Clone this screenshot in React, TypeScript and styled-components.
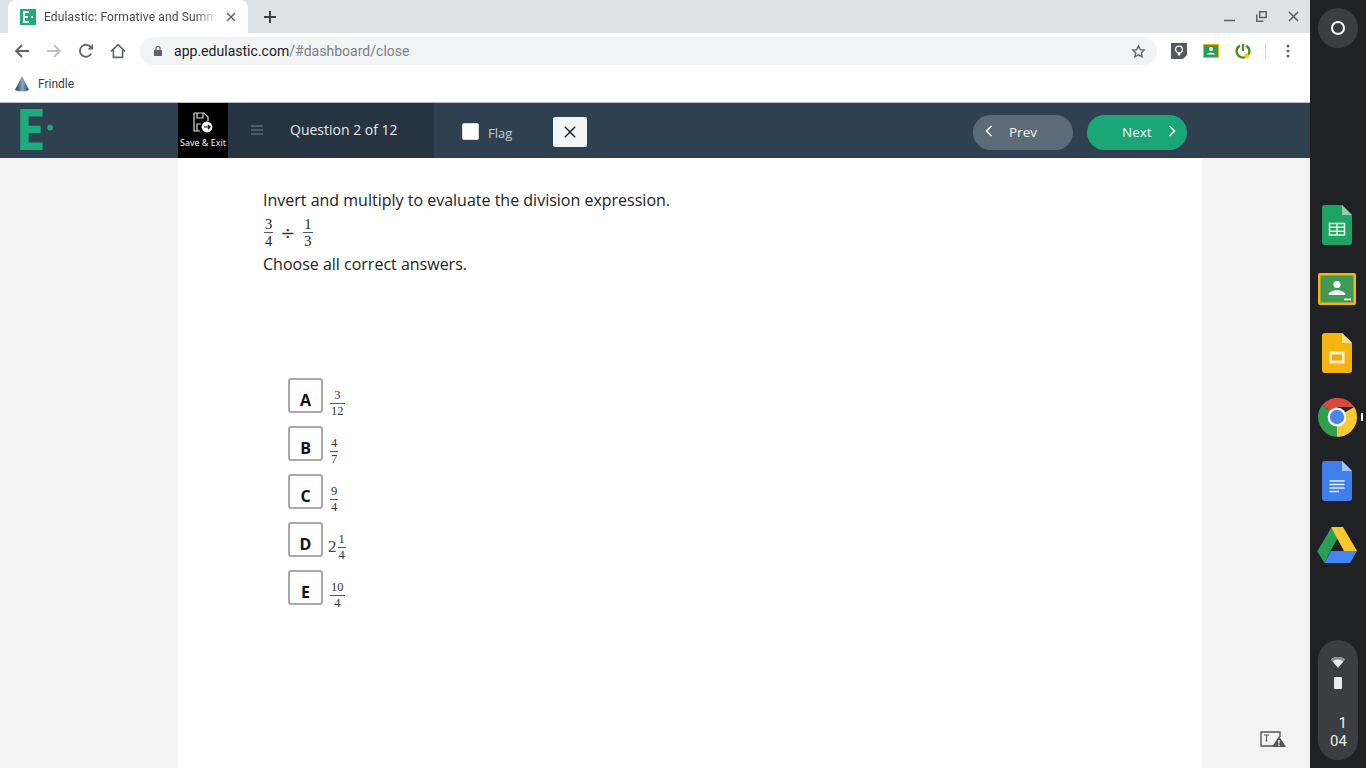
import styled, { createGlobalStyle } from "styled-components";

const GlobalStyle = createGlobalStyle`
  html, body {
    margin: 0;
    padding: 0;
    height: 100%;
    overflow: hidden;
  }
  #root {
    height: 100%;
  }
  * {
    box-sizing: border-box;
  }
`;

const answers = [
  { letter: "A", num: "3", den: "12" },
  { letter: "B", num: "4", den: "7" },
  { letter: "C", num: "9", den: "4" },
  { letter: "D", whole: "2", num: "1", den: "4" },
  { letter: "E", num: "10", den: "4" },
];

function Fraction({ num, den, big }: { num: string; den: string; big?: boolean }) {
  return (
    <Frac $big={!!big}>
      <FracNum>{num}</FracNum>
      <FracDen>{den}</FracDen>
    </Frac>
  );
}

function EduLogo({ size }: { size: number }) {
  return (
    <svg width={size} height={size * 1.14} viewBox="0 0 36 44">
      <path d="M0 0H24V8H9V18H22V26H9V36H24V44H0Z" fill="#1fab7c" />
      <circle cx="32" cy="20" r="3" fill="#1fab7c" />
    </svg>
  );
}

export default function App() {
  return (
    <Screen>
      <GlobalStyle />
      <Main>
        <TabStrip>
          <Tab>
            <Favicon>
              <svg width="10" height="12" viewBox="0 0 10 12">
                <path d="M0 0H6V2H2V5H5V7H2V10H6V12H0Z" fill="#fff" />
                <rect x="8" y="5" width="2" height="2" fill="#fff" />
              </svg>
            </Favicon>
            <TabTitle>Edulastic: Formative and Summ</TabTitle>
            <svg width="10" height="10" viewBox="0 0 10 10">
              <path d="M1 1L9 9M9 1L1 9" stroke="#5f6368" strokeWidth="1.4" />
            </svg>
          </Tab>
          <NewTab>
            <svg width="12" height="12" viewBox="0 0 12 12">
              <path d="M6 0V12M0 6H12" stroke="#3c4043" strokeWidth="2" />
            </svg>
          </NewTab>
          <WindowControls>
            <svg width="11" height="11" viewBox="0 0 11 11">
              <path d="M0 9.5H11" stroke="#5f6368" strokeWidth="1.6" />
            </svg>
            <svg width="11" height="11" viewBox="0 0 11 11">
              <path d="M3.7 .8H10.2V6.6H3.7Z" fill="none" stroke="#5f6368" strokeWidth="1.5" />
              <path d="M.8 3.6V10.2H7.4" fill="none" stroke="#5f6368" strokeWidth="1.5" />
            </svg>
            <svg width="11" height="11" viewBox="0 0 11 11">
              <path d="M1 1L10 10M10 1L1 10" stroke="#5f6368" strokeWidth="1.7" />
            </svg>
          </WindowControls>
        </TabStrip>

        <Toolbar>
          <NavIcons>
            <svg width="16" height="16" viewBox="0 0 16 16">
              <path d="M15 8H2M8 2L2 8L8 14" fill="none" stroke="#5f6368" strokeWidth="1.8" />
            </svg>
            <svg width="16" height="16" viewBox="0 0 16 16">
              <path d="M1 8H14M8 2L14 8L8 14" fill="none" stroke="#bdc1c6" strokeWidth="1.8" />
            </svg>
            <svg width="16" height="16" viewBox="0 0 16 16">
              <path d="M13.2 10.6A6 6 0 1 1 13 4.6" fill="none" stroke="#5f6368" strokeWidth="1.8" />
              <path d="M9.6 6.4H15V1Z" fill="#5f6368" />
            </svg>
            <svg width="16" height="16" viewBox="0 0 16 16">
              <path d="M1 8.4L8 1.6L15 8.4M3.4 7V14.4H12.6V7" fill="none" stroke="#5f6368" strokeWidth="1.6" />
            </svg>
          </NavIcons>
          <Omnibox>
            <svg width="10" height="12" viewBox="0 0 10 12">
              <path d="M1 5H9V11H1Z" fill="#5f6368" />
              <path d="M3 5V3.4A2 2 0 0 1 7 3.4V5" fill="none" stroke="#5f6368" strokeWidth="1.2" />
            </svg>
            <Url>
              app.edulastic.com<UrlPath>/#dashboard/close</UrlPath>
            </Url>
            <svg width="15" height="15" viewBox="0 0 24 24">
              <path
                d="M12 3l2.8 5.9 6.4.8-4.7 4.4 1.2 6.4L12 17.4l-5.7 3.1 1.2-6.4L2.8 9.7l6.4-.8z"
                fill="none"
                stroke="#5f6368"
                strokeWidth="2.2"
              />
            </svg>
          </Omnibox>
          <Extensions>
            <svg width="16" height="16" viewBox="0 0 16 16">
              <path d="M0 0H16V12L12 16H0Z" fill="#55585c" />
              <circle cx="8" cy="6.5" r="3.4" fill="none" stroke="#fff" strokeWidth="1.2" />
              <rect x="6.8" y="10" width="2.4" height="2.4" fill="#fff" />
            </svg>
            <svg width="16" height="14" viewBox="0 0 16 14">
              <rect width="16" height="14" fill="#f4b400" />
              <rect x="1" y="1" width="14" height="12" fill="#2a9d5c" />
              <circle cx="8" cy="5" r="2" fill="#fff" />
              <path d="M4 10.5C4 8 12 8 12 10.5Z" fill="#fff" />
            </svg>
            <svg width="16" height="16" viewBox="0 0 16 16">
              <path d="M5 2.6A6.4 6.4 0 1 0 11 2.6" fill="none" stroke="#4f8a2c" strokeWidth="2.4" />
              <path d="M8 1V8" stroke="#4f8a2c" strokeWidth="2.2" />
              <circle cx="11.6" cy="13" r="2.4" fill="#f6d000" />
            </svg>
            <ToolbarDivider />
            <svg width="4" height="14" viewBox="0 0 4 14">
              <circle cx="2" cy="2" r="1.5" fill="#5f6368" />
              <circle cx="2" cy="7" r="1.5" fill="#5f6368" />
              <circle cx="2" cy="12" r="1.5" fill="#5f6368" />
            </svg>
          </Extensions>
        </Toolbar>

        <BookmarkBar>
          <svg width="16" height="16" viewBox="0 0 16 16">
            <defs>
              <linearGradient id="frindle" x1="0" x2="1">
                <stop offset="0" stopColor="#1f3a5c" />
                <stop offset="0.55" stopColor="#8fa6bc" />
                <stop offset="1" stopColor="#1f3a5c" />
              </linearGradient>
            </defs>
            <path d="M8 0L15 14Q8 17 1 14Z" fill="url(#frindle)" />
          </svg>
          <BookmarkLabel>Frindle</BookmarkLabel>
        </BookmarkBar>

        <AppHeader>
          <LogoArea>
            <EduLogo size={36} />
          </LogoArea>
          <SaveExit>
            <svg width="24" height="22" viewBox="0 0 24 22">
              <path d="M3 1H13L17 5V9M9 19H3V1" fill="none" stroke="#ddd" strokeWidth="1.2" />
              <path d="M6 1V6H12V1M6 19V12H10" fill="none" stroke="#ddd" strokeWidth="1.2" />
              <circle cx="16" cy="15" r="5.4" fill="#fff" />
              <path d="M13 15H19M17 13L19 15L17 17" fill="none" stroke="#000" strokeWidth="1.2" />
            </svg>
            <SaveLabel>Save &amp; Exit</SaveLabel>
          </SaveExit>
          <QuestionNav>
            <svg width="12" height="10" viewBox="0 0 12 10">
              <path d="M0 1H12M0 5H12M0 9H12" stroke="#5d6b78" strokeWidth="1.4" />
            </svg>
            <QuestionLabel>Question 2 of 12</QuestionLabel>
          </QuestionNav>
          <FlagGroup>
            <FlagBox />
            <FlagLabel>Flag</FlagLabel>
            <CloseButton>
              <svg width="12" height="12" viewBox="0 0 12 12">
                <path d="M.8 .8L11.2 11.2M11.2 .8L.8 11.2" stroke="#222" strokeWidth="1.5" />
              </svg>
            </CloseButton>
          </FlagGroup>
          <Pager>
            <PagerButton $kind="prev">
              <svg width="8" height="12" viewBox="0 0 8 12">
                <path d="M6.5 1L1.5 6L6.5 11" fill="none" stroke="#fff" strokeWidth="1.5" />
              </svg>
              <span>Prev</span>
            </PagerButton>
            <PagerButton $kind="next">
              <span>Next</span>
              <svg width="8" height="12" viewBox="0 0 8 12">
                <path d="M1.5 1L6.5 6L1.5 11" fill="none" stroke="#fff" strokeWidth="1.5" />
              </svg>
            </PagerButton>
          </Pager>
        </AppHeader>

        <Body>
          <Sheet>
            <Prompt>Invert and multiply to evaluate the division expression.</Prompt>
            <Expression>
              <Fraction big num="3" den="4" />
              <DivideSign>÷</DivideSign>
              <Fraction big num="1" den="3" />
            </Expression>
            <Prompt>Choose all correct answers.</Prompt>
            <AnswerList>
              {answers.map((a) => (
                <AnswerRow key={a.letter}>
                  <LetterBox>{a.letter}</LetterBox>
                  <AnswerMath $mixed={!!a.whole}>
                    {a.whole && <Whole>{a.whole}</Whole>}
                    <Fraction num={a.num} den={a.den} />
                  </AnswerMath>
                </AnswerRow>
              ))}
            </AnswerList>
          </Sheet>
          <NoticeIcon>
            <svg width="26" height="16" viewBox="0 0 26 16">
              <path d="M13 15H1V1H20V6" fill="none" stroke="#555" strokeWidth="1.4" />
              <path d="M4 4H9M6.5 4V10M5.5 10H7.5" fill="none" stroke="#555" strokeWidth="1" />
              <path d="M19 5L26 16H12Z" fill="#555" />
              <path d="M19 9V12.6M19 13.6V15" stroke="#f3f3f3" strokeWidth="1.4" />
            </svg>
          </NoticeIcon>
        </Body>
      </Main>

      <Shelf>
        <Launcher>
          <LauncherRing />
        </Launcher>
        <ShelfApps>
          <ShelfApp>
            <svg width="30" height="40" viewBox="0 0 30 40">
              <path d="M3 0H20L30 10V37A3 3 0 0 1 27 40H3A3 3 0 0 1 0 37V3A3 3 0 0 1 3 0Z" fill="#1fa463" />
              <path d="M20 0L30 10H20Z" fill="#8ed1b1" />
              <path d="M7.5 18.5H22.5V30H7.5ZM7.5 22.3H22.5M7.5 26.2H22.5M15 18.5V30" fill="none" stroke="#e8f5ee" strokeWidth="1.5" />
            </svg>
          </ShelfApp>
          <ShelfApp>
            <svg width="38" height="32" viewBox="0 0 38 32">
              <rect width="38" height="32" rx="2" fill="#f5b50f" />
              <rect x="2.5" y="2.5" width="33" height="27" fill="#3f9a55" />
              <circle cx="19" cy="11.5" r="3.6" fill="#fff" />
              <path d="M10.5 22C10.5 15.5 27.5 15.5 27.5 22Z" fill="#fff" />
              <rect x="26" y="25.5" width="7" height="1.8" fill="#fff" />
            </svg>
          </ShelfApp>
          <ShelfApp>
            <svg width="30" height="40" viewBox="0 0 30 40">
              <path d="M3 0H20L30 10V37A3 3 0 0 1 27 40H3A3 3 0 0 1 0 37V3A3 3 0 0 1 3 0Z" fill="#f6b40e" />
              <path d="M20 0L30 10H20Z" fill="#fbe08c" />
              <rect x="7.5" y="18.5" width="15" height="12" fill="#fdf0cb" />
              <rect x="10" y="21.5" width="10" height="6" fill="#f0a80a" />
            </svg>
          </ShelfApp>
          <ShelfApp>
            <svg width="40" height="40" viewBox="0 0 40 40">
              <path d="M20 20L5.2 8A20 20 0 0 1 37.3 10H20Z" fill="#d8483b" />
              <path d="M20 20L37.3 10A20 20 0 0 1 20 40Z" fill="#fbc934" />
              <path d="M20 20L20 40A20 20 0 0 1 5.2 8Z" fill="#2f9e4f" />
              <circle cx="20" cy="20" r="9.4" fill="#fff" />
              <circle cx="20" cy="20" r="7.2" fill="#4b86e8" />
            </svg>
          </ShelfApp>
          <ShelfApp>
            <svg width="30" height="40" viewBox="0 0 30 40">
              <path d="M3 0H20L30 10V37A3 3 0 0 1 27 40H3A3 3 0 0 1 0 37V3A3 3 0 0 1 3 0Z" fill="#3f7fea" />
              <path d="M20 0L30 10H20Z" fill="#a6c5f7" />
              <path d="M7.5 20H22.5M7.5 23.5H22.5M7.5 27H22.5M7.5 30.5H17" stroke="#e5eefc" strokeWidth="1.6" />
            </svg>
          </ShelfApp>
          <ShelfApp>
            <svg width="40" height="36" viewBox="0 0 40 36">
              <path d="M14 0H26L13.5 23H0.5Z" fill="#2a9d57" transform="translate(0 1)" />
              <path d="M14 0H26L40 24H27Z" fill="#f8c82d" />
              <path d="M7.5 36L14 24H40L33 36Z" fill="#4285f4" />
              <path d="M0 24H13.5L7.5 36Z" fill="#2a9d57" />
            </svg>
          </ShelfApp>
          <ActiveDot />
        </ShelfApps>
        <StatusTray>
          <svg width="14" height="11" viewBox="0 0 14 11">
            <path d="M0 2.4A10.5 10.5 0 0 1 14 2.4L7 11Z" fill="#e8eaed" />
            <path d="M0 2.4A10.5 10.5 0 0 1 14 2.4L12.3 4.4A8.4 8.4 0 0 0 1.7 4.4Z" fill="#8d8f93" />
          </svg>
          <BatteryIcon />
          <ClockText>
            <span>1</span>
            <span>04</span>
          </ClockText>
        </StatusTray>
      </Shelf>
    </Screen>
  );
}

//style
const Screen = styled.div`
  display: flex;
  width: 1366px;
  height: 768px;
  overflow: hidden;
`;

const Main = styled.div`
  width: 1310px;
  display: flex;
  flex-direction: column;
  background: #f3f3f3;
`;

const TabStrip = styled.div`
  height: 33px;
  background: #dee1e6;
  display: flex;
  align-items: center;
  padding-left: 8px;
`;

const Tab = styled.div`
  width: 240px;
  height: 33px;
  background: #fff;
  border-radius: 8px 8px 0 0;
  display: flex;
  align-items: center;
  padding: 0 11px 0 12px;
`;

const Favicon = styled.div`
  width: 16px;
  height: 16px;
  background: #1fab7c;
  display: flex;
  align-items: center;
  justify-content: center;
  flex-shrink: 0;
`;

const TabTitle = styled.div`
  width: 173px;
  margin: 0 9px 0 8px;
  font: 12px "Roboto", sans-serif;
  letter-spacing: 0.15px;
  color: #45484c;
  white-space: nowrap;
  overflow: hidden;
  mask-image: linear-gradient(to right, #000 88%, transparent 100%);
`;

const NewTab = styled.div`
  margin-left: 16px;
  display: flex;
`;

const WindowControls = styled.div`
  margin-left: auto;
  display: flex;
  align-items: center;
  gap: 21px;
  padding-right: 11px;
`;

const Toolbar = styled.div`
  height: 37px;
  background: #fff;
  display: flex;
  align-items: center;
  padding: 0 20px 1px 14px;
`;

const NavIcons = styled.div`
  display: flex;
  align-items: center;
  gap: 16px;
`;

const Omnibox = styled.div`
  margin-left: 14px;
  width: 1017px;
  height: 28px;
  background: #f1f3f4;
  border-radius: 14px;
  display: flex;
  align-items: center;
  padding: 0 11px 0 13px;
`;

const Url = styled.div`
  flex: 1;
  margin-left: 11px;
  font: 14px "Roboto", sans-serif;
  letter-spacing: 0.02px;
  color: #202124;
`;

const UrlPath = styled.span`
  color: #7c8085;
`;

const Extensions = styled.div`
  margin-left: auto;
  display: flex;
  align-items: center;
  gap: 16px;
`;

const ToolbarDivider = styled.div`
  width: 1px;
  height: 16px;
  background: #d6d8db;
  margin: 0 4px 0 -2px;
`;

const BookmarkBar = styled.div`
  height: 32px;
  background: #fff;
  display: flex;
  align-items: center;
  padding: 0 0 4px 14px;
`;

const BookmarkLabel = styled.span`
  margin-left: 8px;
  font: 12px "Roboto", sans-serif;
  color: #3c4043;
`;

const AppHeader = styled.div`
  height: 56px;
  flex-shrink: 0;
  border-top: 1px solid #b9bdc1;
  background: #2f4151;
  display: flex;
  color: #fff;
`;

const LogoArea = styled.div`
  width: 178px;
  padding: 6px 0 0 19px;
`;

const SaveExit = styled.div`
  width: 50px;
  background: #000;
  display: flex;
  flex-direction: column;
  align-items: center;
  padding-top: 9px;
`;

const SaveLabel = styled.span`
  font: 9px "Open Sans", sans-serif;
  margin-top: 2px;
  white-space: nowrap;
`;

const QuestionNav = styled.div`
  width: 206px;
  background: #263340;
  display: flex;
  align-items: center;
  padding: 0 0 2px 23px;
`;

const QuestionLabel = styled.span`
  margin-left: 27px;
  font: 14px "Open Sans", sans-serif;
  color: #e6e9ec;
`;

const FlagGroup = styled.div`
  display: flex;
  align-items: center;
  padding: 3px 0 0 28px;
`;

const FlagBox = styled.div`
  width: 17px;
  height: 17px;
  margin-top: -2px;
  background: #fff;
  border: 1px solid #d9d9d9;
  border-radius: 2px;
`;

const FlagLabel = styled.span`
  margin-left: 9px;
  padding-top: 1px;
  font: 13px "Open Sans", sans-serif;
  color: #c9ced3;
  width: 65px;
`;

const CloseButton = styled.div`
  width: 34px;
  height: 30px;
  background: #f4f5f6;
  border-radius: 2px;
  display: flex;
  align-items: center;
  justify-content: center;
`;

const Pager = styled.div`
  margin-left: 386px;
  display: flex;
  align-items: center;
  gap: 14px;
  padding-top: 3px;
`;

const PagerButton = styled.div<{ $kind: "prev" | "next" }>`
  width: 100px;
  height: 35px;
  border-radius: 18px;
  background: ${(p) => (p.$kind === "prev" ? "#5d6b78" : "#1aa676")};
  display: flex;
  align-items: center;
  padding: ${(p) => (p.$kind === "prev" ? "0 0 0 12px" : "0 11px 0 35px")};
  justify-content: ${(p) => (p.$kind === "prev" ? "flex-start" : "space-between")};
  font: 13.5px "Open Sans", sans-serif;
  color: #f0f3f5;
  span {
    margin-left: ${(p) => (p.$kind === "prev" ? "16px" : "0")};
  }
  svg {
    margin-top: -2px;
  }
`;

const Body = styled.div`
  flex: 1;
  position: relative;
  display: flex;
  justify-content: flex-start;
  padding-left: 178px;
`;

const Sheet = styled.div`
  width: 1024px;
  background: #fff;
  padding: 31px 0 0 85px;
`;

const Prompt = styled.div`
  font: 16px/22px "Open Sans", sans-serif;
  color: #222;
`;

const Expression = styled.div`
  display: flex;
  align-items: center;
  height: 30px;
  margin: 6px 0 6px;
`;

const DivideSign = styled.span`
  font: 18px "DejaVu Serif", serif;
  color: #333;
  margin: 0 9px 0 6px;
  width: 13px;
  text-align: center;
`;

const Frac = styled.span<{ $big: boolean }>`
  display: inline-flex;
  flex-direction: column;
  align-items: center;
  font-family: "Liberation Serif", serif;
  font-size: ${(p) => (p.$big ? "14.5px" : "12.5px")};
  line-height: ${(p) => (p.$big ? "14px" : "13px")};
  color: ${(p) => (p.$big ? "#222" : "#333")};
  padding: 0 1px;
`;

const FracNum = styled.span`
  padding: 0 1px 1px;
  border-bottom: 1px solid #555;
  min-width: 8px;
  text-align: center;
  width: 100%;
`;

const FracDen = styled.span`
  padding: 1px 1px 0;
`;

const AnswerList = styled.div`
  margin-top: 103px;
  margin-left: 25px;
  display: flex;
  flex-direction: column;
  gap: 13px;
`;

const AnswerRow = styled.div`
  display: flex;
  align-items: center;
  height: 35px;
`;

const LetterBox = styled.div`
  width: 35px;
  height: 35px;
  border: 2px solid #a9a9a9;
  border-radius: 3px;
  display: flex;
  align-items: center;
  justify-content: center;
  padding-top: 9px;
  font: bold 16px "Open Sans", sans-serif;
  color: #111;
`;

const AnswerMath = styled.div<{ $mixed: boolean }>`
  margin-left: ${(p) => (p.$mixed ? "5px" : "6px")};
  display: flex;
  align-items: center;
  padding-top: 15px;
`;

const Whole = styled.span`
  font: 17px "Liberation Serif", serif;
  color: #444;
`;

const NoticeIcon = styled.div`
  position: absolute;
  right: 24px;
  bottom: 17px;
`;

const Shelf = styled.div`
  width: 56px;
  background: #202124;
  display: flex;
  flex-direction: column;
  align-items: center;
  padding-top: 8px;
`;

const Launcher = styled.div`
  width: 40px;
  height: 40px;
  border-radius: 50%;
  background: #3c3d41;
  display: flex;
  align-items: center;
  justify-content: center;
`;

const LauncherRing = styled.div`
  width: 14px;
  height: 14px;
  border: 2px solid #fff;
  border-radius: 50%;
`;

const ShelfApps = styled.div`
  position: relative;
  margin-top: 145px;
  display: flex;
  flex-direction: column;
`;

const ShelfApp = styled.div`
  width: 56px;
  height: 64px;
  margin-left: -2px;
  display: flex;
  align-items: center;
  justify-content: center;
`;

const ActiveDot = styled.div`
  position: absolute;
  right: 2px;
  top: 220px;
  width: 2px;
  height: 8px;
  background: #fff;
`;

const StatusTray = styled.div`
  margin-top: auto;
  margin-bottom: 8px;
  width: 40px;
  height: 120px;
  border-radius: 20px;
  background: #3c3d41;
  display: flex;
  flex-direction: column;
  align-items: center;
  padding-top: 17px;
`;

const BatteryIcon = styled.div`
  width: 8px;
  height: 12px;
  margin-top: 9px;
  background: #e8eaed;
  border-radius: 1px;
`;

const ClockText = styled.div`
  margin-top: 25px;
  margin-left: 1px;
  display: flex;
  flex-direction: column;
  align-items: flex-end;
  font: 15px/18px "Roboto", sans-serif;
  color: #e8eaed;
`;
